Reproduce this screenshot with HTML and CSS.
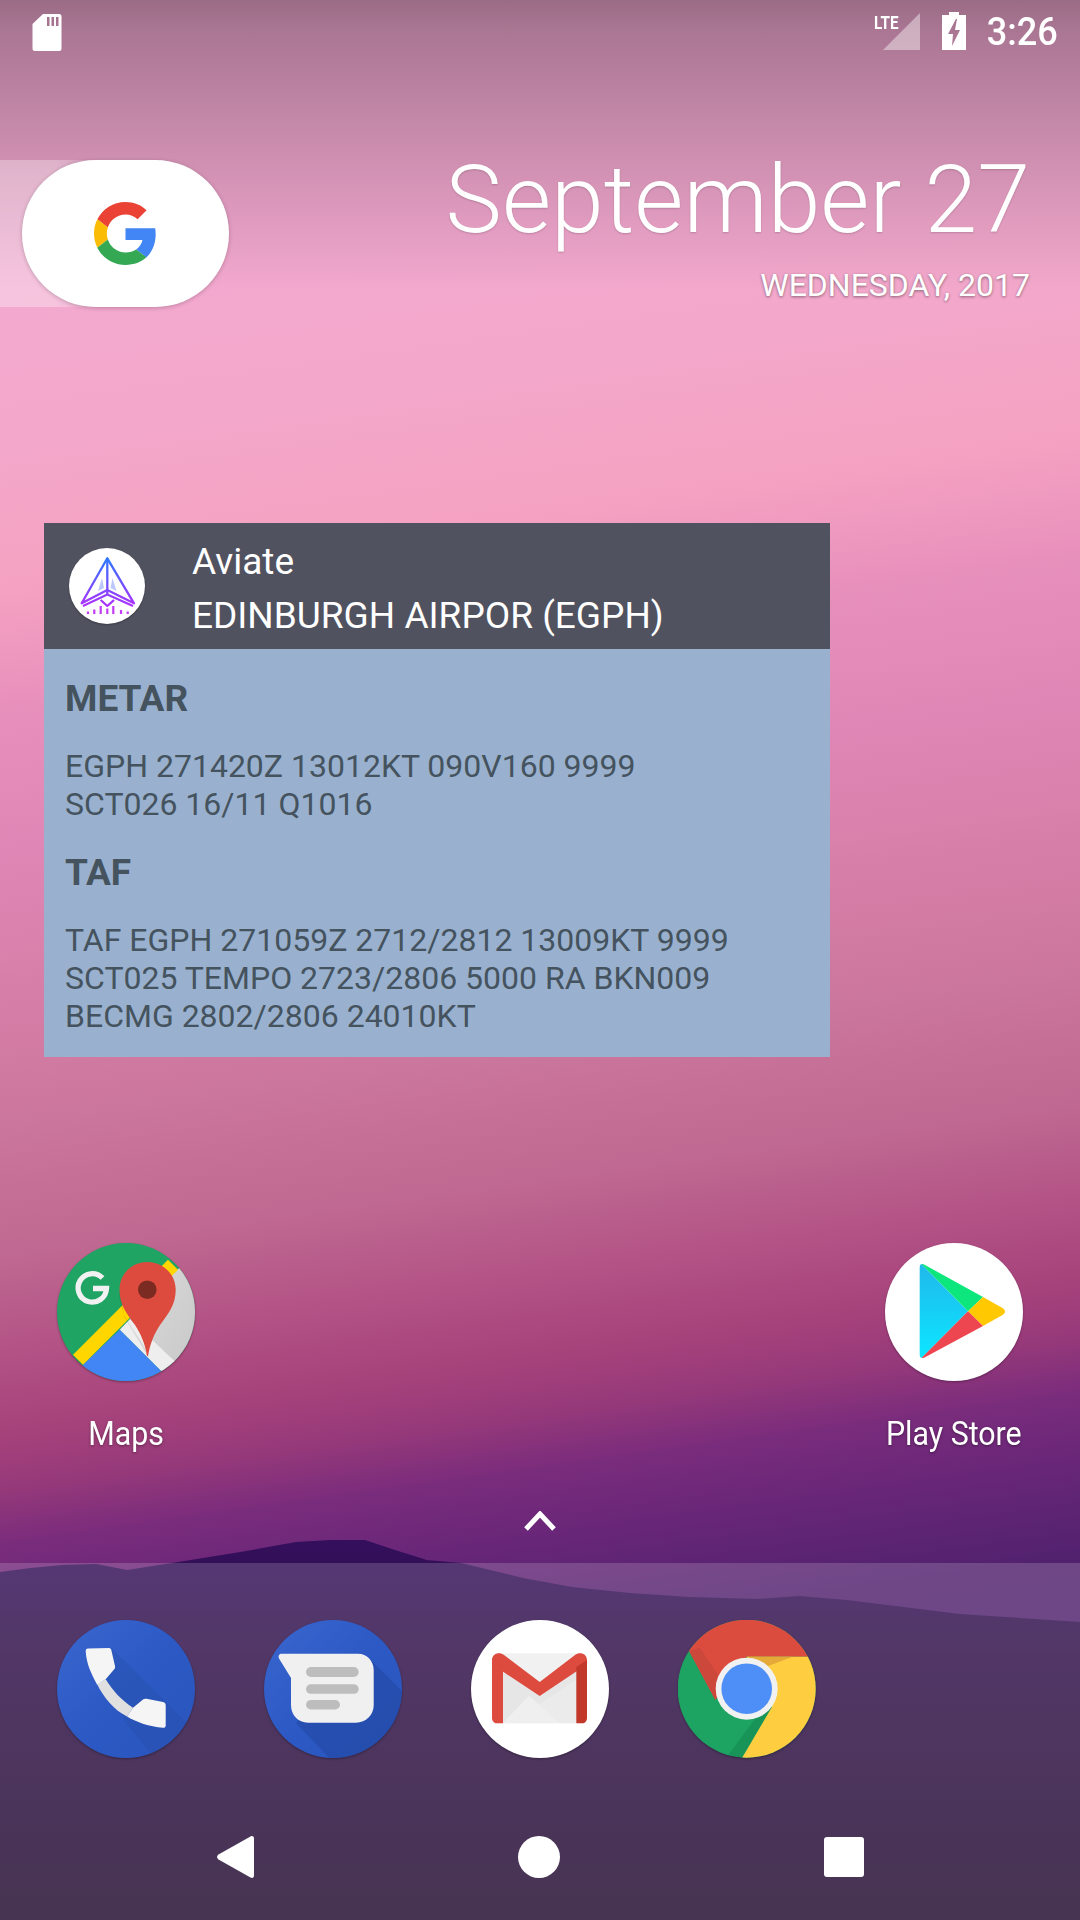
FILE: index.html
```html
<!DOCTYPE html>
<html lang="en">
<head>
<meta charset="utf-8">
<title>Home screen</title>
<link rel="stylesheet" href="styles.css">
</head>
<body>
<main class="screen">
  <svg class="hills" viewBox="0 0 1080 1920" aria-hidden="true">
    <defs><linearGradient id="hillFill" x1="0" y1="1540" x2="0" y2="1920" gradientUnits="userSpaceOnUse"><stop offset="0" stop-color="#340f5c"/><stop offset=".3" stop-color="#2f0f48"/><stop offset="1" stop-color="#210a2e"/></linearGradient></defs>
    <path fill="url(#hillFill)" d="M0 1572 30 1568 62 1565 96 1564 112 1567 127 1570 172 1563 240 1552 296 1542 330 1540 365 1540 395 1550 427 1560 461 1563 523 1578 572 1587 630 1593 689 1597 757 1599 799 1596 847 1600 960 1614 1080 1622V1920H0Z"/>
  </svg>

  <header class="status">
    <svg class="sd" viewBox="0 0 30 38"><path fill="#fff" d="M11 1h16a2.500 2.500 0 0 1 2.500 2.500v32a2.500 2.500 0 0 1-2.500 2.500H3a2.500 2.500 0 0 1-2.500-2.500V11zM15 4v9h2.500V4zm4.500 0v9H22V4zM24 4v9h2.500V4z" fill-rule="evenodd"/></svg>
    <div class="status-right">
      <span class="lte">LTE</span>
      <svg class="signal" viewBox="0 0 37 37"><path fill="#fff" fill-opacity=".42" d="M37 0V37H0Z"/></svg>
      <svg class="battery" viewBox="0 0 24 38"><path fill="#fff" fill-rule="evenodd" d="M7 0h10v3h7v35H0V3h7zM14 7 6 22h5l-1 12 8-16h-5l2-11z"/></svg>
      <span class="clock">3:26</span>
    </div>
  </header>

  <section class="hero">
    <div class="search">
      <svg class="google" viewBox="0 0 48 48">
        <path fill="#EA4335" d="M24 9.500c3.540 0 6.710 1.220 9.210 3.600l6.850-6.850C35.900 2.380 30.470 0 24 0 14.620 0 6.510 5.380 2.560 13.220l7.980 6.190C12.430 13.720 17.740 9.500 24 9.500z"/>
        <path fill="#4285F4" d="M46.980 24.550c0-1.570-.15-3.090-.38-4.550H24v9.020h12.940c-.58 2.960-2.260 5.480-4.780 7.180l7.730 6c4.510-4.180 7.090-10.360 7.090-17.650z"/>
        <path fill="#FBBC05" d="M10.530 28.590c-.48-1.450-.76-2.990-.76-4.590s.27-3.140.76-4.590l-7.980-6.190C.92 16.460 0 20.120 0 24c0 3.880.92 7.540 2.560 10.780l7.970-6.190z"/>
        <path fill="#34A853" d="M24 48c6.480 0 11.930-2.130 15.890-5.810l-7.730-6c-2.150 1.450-4.920 2.300-8.160 2.300-6.260 0-11.570-4.220-13.470-9.910l-7.980 6.190C6.510 42.620 14.620 48 24 48z"/>
      </svg>
    </div>
    <div class="date">
      <div class="date-main">September 27</div>
      <div class="date-sub">WEDNESDAY, 2017</div>
    </div>
  </section>

  <section class="widget">
    <div class="widget-head">
      <div class="widget-logo">
        <svg viewBox="0 0 76 76">
          <defs><linearGradient id="plane" x1="0" y1="10" x2="0" y2="60" gradientUnits="userSpaceOnUse"><stop offset="0" stop-color="#2d78ff"/><stop offset=".6" stop-color="#7a4cff"/><stop offset="1" stop-color="#b42cff"/></linearGradient></defs>
          <path fill="#bcc8fb" d="M33 30 29 43 35 40ZM43.500 30 47.500 43 41.500 40Z"/>
          <g fill="none" stroke="url(#plane)" stroke-width="2.300" stroke-linejoin="round">
            <path d="M38.300 10.300 12.700 55.300 38.300 42 65 55.300Z"/>
            <path d="M38.300 10.300V47"/>
            <path d="M14 58 38.300 46.500 64 58" stroke-width="2"/>
            <path d="M31.700 52 38.300 58 45 52"/>
          </g>
          <path stroke="#c23cf5" stroke-width="2.200" d="M19 63.500V66M25.300 61.500V66M31.700 58V66M38.300 60.500V66M44.300 58V66M52 62V66M58.700 63.500V66"/>
        </svg>
      </div>
      <div class="widget-titles">
        <div>Aviate</div>
        <div>EDINBURGH AIRPOR (EGPH)</div>
      </div>
    </div>
    <div class="widget-body">
      <h2>METAR</h2>
      <p>EGPH 271420Z 13012KT 090V160 9999<br>SCT026 16/11 Q1016</p>
      <h2 class="taf">TAF</h2>
      <p>TAF EGPH 271059Z 2712/2812 13009KT 9999<br>SCT025 TEMPO 2723/2806 5000 RA BKN009<br>BECMG 2802/2806 24010KT</p>
    </div>
  </section>

  <section class="apps">
    <div class="app app-first">
      <svg class="icon" viewBox="0 0 138 138">
        <defs>
          <clipPath id="cMaps"><circle cx="69" cy="69" r="69"/></clipPath>
          <linearGradient id="mapsGrey" x1="0" y1="0" x2="1" y2="1"><stop offset="0" stop-color="#e0e0e0"/><stop offset=".45" stop-color="#d2d2d2"/><stop offset="1" stop-color="#c6c6c6"/></linearGradient>
        </defs>
        <g clip-path="url(#cMaps)">
          <rect width="138" height="138" fill="#1fa463"/>
          <path fill="url(#mapsGrey)" d="M73 76 121 26 145 10V145H125L116 120Z"/>
          <path fill="#eeeeee" d="M62.700 86.700 73 76 128 128 104.300 128.300Z"/>
          <path fill="#4285f4" d="M62.700 86.700 104.300 128.300 104 145H10L26 121.700Z"/>
          <path fill="#ffd600" d="M16 111.700 111 16.700 121 26.700 26 121.700Z"/>
          <path fill="none" stroke="#f1f1f1" stroke-width="5.300" d="M45.500 35A14.200 14.200 0 1 0 49.500 45.500H36"/>
          <path fill="#000" fill-opacity=".1" d="M62 47C62 78 84 90 92 115L68 75Z"/>
          <path fill="#dd4b3e" d="M90.300 19C74.500 19 62.500 31 62.500 46.700 62.500 62 70 71 78 82 84 91 88 101 90 113H91C93 101 97 91 103 82 111 71 118.700 62 118.700 46.700 118.700 31 106 19 90.300 19Z"/>
          <circle cx="90.300" cy="46.700" r="9.300" fill="#7b2b22"/>
        </g>
      </svg>
      <span class="app-label">Maps</span>
    </div>
    <div class="app app-last">
      <svg class="icon" viewBox="0 0 138 138">
        <defs><linearGradient id="playBlue" x1="0" y1="0" x2="0" y2="1"><stop offset="0" stop-color="#20b8ec"/><stop offset="1" stop-color="#0ce6ff"/></linearGradient></defs>
        <circle cx="69" cy="69" r="69" fill="#fff"/>
        <path fill="url(#playBlue)" d="M36.500 21C35 21.500 34.700 23 34.700 25V111C34.700 113 35 114.500 36.500 115L83 68.300Z"/>
        <path fill="#0ce67c" d="M36.500 21C37.500 20.800 38.500 21 40 22L98 54 83 68.300Z"/>
        <path fill="#ffc800" d="M98 54 117.500 65C120.800 67 120.800 70 117.500 72L98 83 83 68.300Z"/>
        <path fill="#ee4650" d="M36.500 115C37.500 115.300 38.500 115 40 114.200L98 83 83 68.300Z"/>
      </svg>
      <span class="app-label">Play Store</span>
    </div>
  </section>

  <div class="drawer">
    <svg viewBox="0 0 32 20"><path fill="none" stroke="#fff" stroke-width="5" d="M2 18 16 3 30 18"/></svg>
  </div>

  <footer class="dock">
    <div class="dock-row">
      <svg class="icon" viewBox="0 0 138 138">
        <defs>
          <clipPath id="cPhone"><circle cx="69" cy="69" r="69"/></clipPath>
          <linearGradient id="blueDisc" x1="0" y1="0" x2="1" y2="1"><stop offset="0" stop-color="#3a66cf"/><stop offset=".5" stop-color="#2c59c4"/><stop offset="1" stop-color="#2a55bc"/></linearGradient>
        </defs>
        <g clip-path="url(#cPhone)">
          <rect width="138" height="138" fill="url(#blueDisc)"/>
          <path fill="#234a9f" fill-opacity=".28" d="M54.300 28 145 118V145H104L70 105 48 59Z"/>
          <path fill="#e0e0e0" d="M40 64 48.700 59.300C56 71 64 80 76 87.700L70 96.500C57 90 47 78 40 64Z"/>
          <path fill="#f5f5f5" d="M31 28.500 52 28C53.500 28 54 29 54.300 30L58 46C58.300 47.500 58 48.500 57 49.500L48.700 59.300 40 64.500C34 53 29.500 44 28.700 31.500 28.600 29.500 29.500 28.500 31 28.500ZM70 96.500 76 87.700 86 79.500C87 78.700 88 78.500 89.500 78.800L106 82C108 82.500 108.700 83.500 108.700 85.300V105.500C108.700 107 107.500 108 106 107.800 92 106.500 80 102.500 70 96.500Z"/>
        </g>
      </svg>
      <svg class="icon" viewBox="0 0 138 138">
        <defs><clipPath id="cMsg"><circle cx="69" cy="69" r="69"/></clipPath></defs>
        <g clip-path="url(#cMsg)">
          <rect width="138" height="138" fill="url(#blueDisc)"/>
          <path fill="#1f4296" fill-opacity=".4" d="M105 38 145 78V145H72L32 103 60 70Z"/>
          <path fill="#f0f0f0" d="M17.500 33.700H94C103 33.700 109.700 41 109.700 50V85C109.700 95 102 102.700 92 102.700H44C34 102.700 27 95 27 85V58L15.300 39C13.800 36 15 33.700 17.500 33.700Z"/>
          <rect x="42" y="47" width="52.700" height="10" rx="5" fill="#bdbdbd"/>
          <rect x="42" y="64.300" width="52.700" height="9.500" rx="4.750" fill="#bdbdbd"/>
          <rect x="42" y="80" width="34" height="9.500" rx="4.750" fill="#bdbdbd"/>
        </g>
      </svg>
      <svg class="icon" viewBox="0 0 138 138">
        <circle cx="69" cy="69" r="69" fill="#fff"/>
        <rect x="24" y="33.300" width="90" height="70" fill="#f1f1f1"/>
        <path fill="#e6e6e6" d="M32 50 68.700 76 105.300 50V60L68.700 86 58 76 32 103.300Z"/>
        <path fill="#efefef" d="M58 76 89 103.300H32Z"/>
        <path fill="#ebebeb" d="M68.700 84 105.300 60V103.300H89L58 76Z"/>
        <path fill="#dd4b3e" d="M21 40C21 34 28 31 33 35L68.700 62 104 35C109 31 116 34 116 40 116 43 115 45 112 47L68.700 76 25 47C22 45 21 43 21 40Z"/>
        <path fill="#dd4b3e" d="M21 40 32 47V103.300H26C23 103.300 21 101 21 98Z"/>
        <path fill="#c2392b" d="M116 40 105.300 47V103.300H111C114 103.300 116 101 116 98Z"/>
      </svg>
      <svg class="icon" viewBox="0 0 138 138">
        <defs><clipPath id="cChrome"><circle cx="68.700" cy="68.700" r="69"/></clipPath></defs>
        <g clip-path="url(#cChrome)">
          <rect width="138" height="138" fill="#1da462"/>
          <path fill="#178a52" fill-opacity=".6" d="M94 87 64 138H48L82 92Z"/>
          <path fill="#db4c3f" d="M0 -4H138V36.700H68.700L37.300 80 11 31Z"/>
          <path fill="#ffcd40" d="M68.700 36.700H138V138H64L94 87Z"/>
          <path fill="#e5a93a" d="M68.700 36.700H115L90 46Z"/>
          <path fill="#bd4437" fill-opacity=".5" d="M11 31 37.300 80 40 55 22 28Z"/>
        </g>
        <circle cx="68.700" cy="68.700" r="31" fill="#f1f1f1"/>
        <circle cx="68.700" cy="68.700" r="25.300" fill="#4e8ff7"/>
      </svg>
    </div>
    <nav class="nav">
      <svg class="nav-back" viewBox="0 0 37 42"><path fill="#fff" d="M33.500.500C35.500-.500 37 .500 37 2.500V39.500C37 41.500 35.500 42.500 33.500 41.500L1.500 23.500C-.500 22-.500 20 1.500 18.500Z"/></svg>
      <span class="nav-home"></span>
      <span class="nav-recent"></span>
    </nav>
  </footer>
</main>
</body>
</html>
```

FILE: styles.css
```css
* { box-sizing: border-box; }
html, body { margin: 0; padding: 0; }
body { width: 1080px; height: 1920px; overflow: hidden; font-family: Roboto, "Noto Sans", sans-serif; }

.screen {
  position: relative;
  width: 1080px;
  height: 1920px;
  display: flex;
  flex-direction: column;
  overflow: hidden;
  color: #fff;
  background:
    linear-gradient(180deg, rgba(40,30,40,.44) 0, rgba(40,30,40,.36) 30px, rgba(40,30,40,.22) 130px, rgba(40,30,40,0) 290px),
    linear-gradient(172deg, #f3a8cf 0, #f3a8cf 301px, #f3a8cb 420px, #f5a2c2 579px, #e890bc 700px, #df86b6 844px, #d87fa9 970px, #cb769c 1115px, #bf6891 1246px, #b25285 1342px, #a6427b 1420px, #96397a 1474px, #7a2c7c 1530px, #682678 1600px, #52226f 1690px, #4a2168 2078px);
}
.hills { position: absolute; left: 0; top: 0; width: 1080px; height: 1920px; }

.status {
  position: relative;
  height: 64px;
  flex: none;
  display: flex;
  justify-content: space-between;
  align-items: flex-start;
  padding: 13px 22px 0 32px;
}
.sd { width: 30px; height: 38px; display: block; }
.status-right { display: flex; align-items: flex-start; }
.lte { width: 26px; font-size: 19px; line-height: 18px; font-weight: 700; margin: 1px 0 0 0; transform: scaleX(.8); transform-origin: 0 0; white-space: nowrap; }
.signal { width: 37px; height: 37px; margin: 0 0 0 -17px; display: block; }
.battery { width: 24px; height: 38px; margin: -1px 0 0 22px; display: block; }
.clock { font-size: 38px; line-height: 38px; font-weight: 500; margin: 0 0 0 17px; transform: scaleX(.95); transform-origin: 100% 0; }

.hero {
  position: relative;
  z-index: 0;
  margin-top: 96px;
  height: 147px;
  flex: none;
  display: flex;
  justify-content: space-between;
  padding: 0 50px 0 22px;
}
.search {
  position: relative;
  width: 207px;
  height: 147px;
  border-radius: 74px;
  background: #fff;
  box-shadow: 0 1px 4px rgba(0,0,0,.22);
  display: flex;
  align-items: center;
  justify-content: center;
}
.search::before {
  content: "";
  position: absolute;
  left: -22px;
  top: 0;
  width: 110px;
  height: 147px;
  background: linear-gradient(90deg, rgba(255,255,255,.32), rgba(255,255,255,.32) 50%, rgba(255,255,255,0));
  z-index: -1;
}
.google { width: 63px; height: 63px; display: block; }
.date { text-align: right; }
.date-main { font-size: 95px; line-height: 98px; font-weight: 300; margin-top: -9px; text-shadow: 0 1px 2px rgba(0,0,0,.18); white-space: nowrap; }
.date-sub { font-size: 32px; line-height: 36px; margin-top: 18px; text-shadow: 0 1px 3px rgba(0,0,0,.45); white-space: nowrap; }

.widget {
  position: relative;
  margin: 216px 0 0 44px;
  width: 786px;
  height: 534px;
  flex: none;
  background: #99b1ce;
}
.widget-head {
  height: 126px;
  background: #505260;
  display: flex;
  padding: 25px 0 0 25px;
}
.widget-logo {
  width: 76px;
  height: 76px;
  border-radius: 50%;
  background: #fff;
  box-shadow: 0 1px 2px rgba(0,0,0,.3);
  flex: none;
}
.widget-logo svg { width: 76px; height: 76px; display: block; }
.widget-titles { margin: -13px 0 0 47px; font-size: 37px; line-height: 54px; white-space: nowrap; }
.widget-body { padding: 28px 0 0 21px; color: #45535f; }
.widget-body h2 { margin: 0; font-size: 37px; line-height: 44px; font-weight: 700; }
.widget-body p { margin: 26px 0 0; font-size: 32px; line-height: 38px; white-space: nowrap; }
.widget-body .taf { margin-top: 28px; }

.apps {
  position: relative;
  margin-top: 186px;
  padding: 0 22.5px;
  display: grid;
  grid-template-columns: repeat(5, 207px);
  flex: none;
}
.app { display: flex; flex-direction: column; align-items: center; }
.app-first { grid-column: 1; }
.app-last { grid-column: 5; }
.icon { width: 138px; height: 138px; display: block; filter: drop-shadow(0 1px 1px rgba(0,0,0,.3)); }
.app-label { margin-top: 33px; font-size: 33px; line-height: 40px; transform: scaleX(.92); text-shadow: 0 1px 3px rgba(0,0,0,.4); white-space: nowrap; }

.drawer {
  position: relative;
  margin-top: 57px;
  height: 20px;
  display: flex;
  justify-content: center;
  flex: none;
}
.drawer svg { width: 32px; height: 20px; display: block; }

.dock {
  position: absolute;
  left: 0;
  bottom: 0;
  width: 1080px;
  height: 357px;
  padding-top: 57px;
  background: rgba(255,255,255,.17);
}
.dock-row {
  padding: 0 22.5px;
  display: grid;
  grid-template-columns: repeat(5, 207px);
  justify-items: center;
}
.nav {
  position: relative;
  display: flex;
  align-items: center;
  margin-top: 78px;
  height: 42px;
  padding: 0 216px 0 217px;
  justify-content: space-between;
}
.nav-back { width: 37px; height: 42px; display: block; }
.nav-home { width: 42px; height: 42px; border-radius: 50%; background: #fff; }
.nav-recent { width: 40px; height: 40px; border-radius: 3px; background: #fff; }
```
